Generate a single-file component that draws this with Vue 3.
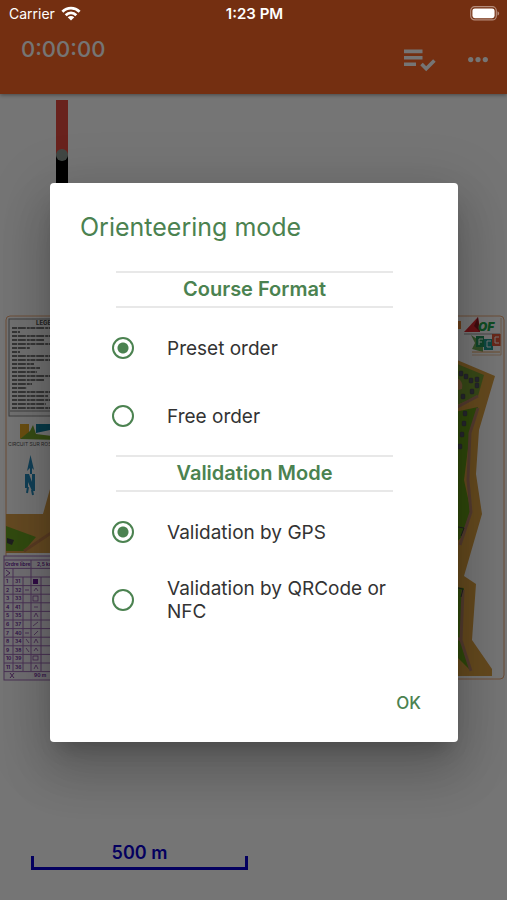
<template>
  <div class="screen">
    <div class="status">
      <div class="carrier">
        <span>Carrier</span>
        <svg width="20" height="16" viewBox="0 0 20 16" aria-hidden="true">
          <g fill="none" stroke="#fff" stroke-width="2.8">
            <path d="M1.4 5.8C6.3 1 13.7 1 18.6 5.8" />
            <path d="M4.7 9.2C7.7 6.2 12.3 6.2 15.3 9.2" />
          </g>
          <path d="M6.7 11.2C8.7 9.5 11.3 9.5 13.3 11.2L10 14.6Z" fill="#fff" />
        </svg>
      </div>
      <span class="time">1:23 PM</span>
      <svg class="battery" width="30" height="15" viewBox="0 0 30 15" aria-hidden="true">
        <rect x="0.7" y="0.7" width="25.6" height="13.2" rx="4" fill="none" stroke="#b58c7b" stroke-width="1.2" />
        <rect x="2.4" y="2.4" width="22.2" height="9.8" rx="2.4" fill="#fff" />
        <path d="M27.5 5.2C29.7 6 29.7 8.8 27.5 9.6Z" fill="#b58c7b" />
      </svg>
    </div>

    <header class="toolbar">
      <span class="timer">0:00:00</span>
      <div class="actions">
        <button type="button" class="action" aria-label="Course format">
          <svg width="32" height="24" viewBox="0 0 32 24" fill="none" stroke="currentColor" stroke-width="3.6">
            <path d="M0 3.4H18.5M0 9.8H18.5M0 16.2H12" />
            <path d="M17.5 16L22.2 20.7L30.4 12.5" />
          </svg>
        </button>
        <button type="button" class="action" aria-label="More">
          <svg width="20" height="24" viewBox="0 0 20 24" fill="currentColor">
            <circle cx="2.7" cy="11.6" r="2.6" />
            <circle cx="10" cy="11.6" r="2.6" />
            <circle cx="17.3" cy="11.6" r="2.6" />
          </svg>
        </button>
      </div>
    </header>

    <main class="map">
      <svg class="needle" width="12" height="116" viewBox="0 0 12 116" aria-hidden="true">
        <rect width="12" height="55" fill="#e54a40" />
        <rect y="55" width="12" height="61" fill="#000" />
        <circle cx="6" cy="55" r="6" fill="#8d9a92" />
      </svg>

      <svg class="sheet" viewBox="0 312 507 372" role="img" aria-label="Course map">
        <rect x="6" y="316" width="498" height="363" rx="4" fill="#fff" stroke="#efaa79" stroke-width="1" />

        <!-- legend -->
        <rect x="9" y="319" width="60" height="97" fill="#f6f6f6" stroke="#888" />
        <text x="36" y="325" class="tiny strong">LEGENDE</text>
        <path
          v-for="(w, i) in legendLines"
          :key="i"
          :d="`M12 ${328 + i * 4}h${w}`"
          stroke="#777"
          stroke-width="1.8"
          stroke-dasharray="5 0.8 8 1 3 0.6"
        />
        <path d="M10 411H60" stroke="#888" />
        <path d="M20 424H29V433L20 439Z" fill="#e9ac27" />
        <path d="M36 424H60V440L50 430L36 433Z" fill="#12809f" />
        <path d="M20 439L30 431L33 425L36 434L60 437V440Z" fill="#79a82c" />
        <text x="8" y="446" class="tiny">CIRCUIT SUR ROSE</text>
        <path d="M30.5 455L34 470L31 467L27 471ZM25 488V474H29L32 482V474H35V491H32L28 482V488Z" fill="#258bbd" />
        <path d="M31 466V474M28 487L27 493M32 490L33 495" stroke="#258bbd" stroke-width="2" />

        <!-- west side of the terrain -->
        <path d="M6 514H43L50 489H60V553H6Z" fill="#dda14a" />
        <path d="M6 526L36 537L24 551H6Z" fill="#6da324" />
        <path d="M24 551L60 527" stroke="#c5834c" stroke-width="3" />
        <path d="M7 538L14 540L12 545L7 543Z" fill="#444" />

        <!-- control descriptions -->
        <g fill="none" stroke="#a06cb8" stroke-width="1">
          <rect x="4" y="556" width="70" height="124" fill="#f7f2fa" />
          <path d="M4 560H74" />
          <path v-for="n in 13" :key="n" :d="`M4 ${559.8 + n * 8.6}H74`" />
          <path d="M13 568V671M23 577V671M31 560V671M41 577V671" />
        </g>
        <g class="controls">
          <text x="5" y="566">Ordre libre</text>
          <text x="37" y="566">2,5 km</text>
          <template v-for="(code, i) in codes" :key="code">
            <text x="6" :y="583 + i * 8.6">{{ i + 1 }}</text>
            <text x="15" :y="583 + i * 8.6">{{ code }}</text>
          </template>
          <text x="34" y="677">90 m</text>
        </g>
        <path d="M6 570L10 573L6 576M10 673L14 678M14 673L10 678" fill="none" stroke="#8c4aa7" />
        <rect x="33" y="579" width="5" height="5" fill="#6d1b9b" />
        <g fill="none" stroke="#8c4aa7" stroke-width="0.8">
          <path d="M25 590H29M34 591L36 588L38 591M34 607H38M33 626L38 622M25 633H29M34 635L38 631M26 639L29 643M26 648L29 652M34 643L36 639L38 643M34 651L36 648L38 651M34 669L36 665L38 669" />
          <rect x="33" y="596" width="5" height="5" />
          <rect x="33" y="656" width="5" height="4" />
          <path d="M34 617L36 613L38 617" />
        </g>

        <!-- partner logos -->
        <path d="M464 332L478 317L480 332Z" fill="#e12a32" />
        <path d="M478 317L480 332L474 326Z" fill="#8d1820" />
        <text x="478" y="331" class="logo">OF</text>
        <path d="M464 334H500" stroke="#999" />
        <rect x="450" y="321" width="11" height="8" fill="#e88a3a" />
        <path d="M471 335L477 339L476 342L483 346V352L472 349L475 343Z" fill="#70ad58" />
        <rect x="476" y="336" width="8" height="11" fill="#24945d" />
        <rect x="484" y="339" width="9" height="11" fill="#1f9d93" />
        <rect x="492" y="334" width="9" height="12" fill="#e5583a" />
        <path d="M479 345v-6h4M479 342h3M491 341h-4v6h4M499 337h-4v6h4" fill="none" stroke="#fff" />
        <path d="M472 352H500" stroke="#eaa361" />
        <path d="M472 355H501V318" fill="none" stroke="#efc49f" />

        <!-- east side of the terrain -->
        <path d="M450 357L495 376L479 430L476 474L482 514L464 576L476 584L472 640L492 669V676H450Z" fill="#dda142" />
        <path d="M450 361L484 375L478 396L450 408Z" fill="#7a9f35" />
        <path d="M450 377Q464 377 462 389L450 392Z" fill="#d59a62" />
        <path d="M450 413L478 407L470 433L464 480L471 512L462 537L450 548Z" fill="#669e19" />
        <path d="M478 396L450 411M478 408L470 433L468 480L471 512L460 545" fill="none" stroke="#b78268" stroke-width="3" />
        <path d="M450 586L464 588L461 640L470 670L450 650Z" fill="#669e19" />
        <path d="M463 590L461 640L450 635M461 640L471 671" fill="none" stroke="#b78268" stroke-width="3" />
        <path d="M458 527L464 528L461 536M458 588L463 589L461 597" fill="none" stroke="#444" stroke-width="1" />
        <g fill="#556" stroke="#444" stroke-width="0.4">
          <rect v-for="([x, y], i) in buildings" :key="i" :x="x" :y="y" width="4" height="5" rx="1" />
        </g>
      </svg>

      <div class="scale">500 m</div>
    </main>

    <div class="scrim">
      <form class="dialog" role="dialog" aria-labelledby="dialog-title" @submit.prevent>
        <h1 id="dialog-title" class="title">Orienteering mode</h1>
        <fieldset v-for="group in groups" :key="group.name" class="group">
          <legend class="heading">{{ group.title }}</legend>
          <label v-for="option in group.options" :key="option.value" class="option">
            <input v-model="selected[group.name]" type="radio" :name="group.name" :value="option.value" class="radio" />
            <span>{{ option.label }}</span>
          </label>
        </fieldset>
        <div class="footer">
          <button type="submit" class="ok">OK</button>
        </div>
      </form>
    </div>
  </div>
</template>

<script setup>
  import { reactive } from 'vue'

  const groups = [
    {
      name: 'format',
      title: 'Course Format',
      options: [
        { value: 'preset', label: 'Preset order' },
        { value: 'free', label: 'Free order' }
      ]
    },
    {
      name: 'validation',
      title: 'Validation Mode',
      options: [
        { value: 'gps', label: 'Validation by GPS' },
        { value: 'manual', label: 'Validation by QRCode or NFC' }
      ]
    }
  ]

  const selected = reactive({ format: 'preset', validation: 'gps' })

  const codes = [31, 32, 33, 41, 35, 37, 40, 34, 38, 39, 36]
  const legendLines = [40, 8, 38, 32, 40, 18, 8, 38, 40, 22, 28, 25, 38, 32, 20, 15, 40, 36, 40, 34, 40]
  const buildings = [
    [459, 371], [464, 374], [469, 378], [475, 377], [475, 383], [470, 389], [461, 394],
    [463, 411], [462, 421], [460, 432], [458, 444]
  ]
</script>

<style>
  body {
    margin: 0;
  }
</style>

<style scoped>
  .screen {
    position: relative;
    display: flex;
    flex-direction: column;
    min-height: 100vh;
    background: #fff;
    font-family: Inter, Roboto, sans-serif;
  }

  .status {
    position: absolute;
    inset: 0 0 auto;
    z-index: 3;
    display: grid;
    grid-template-columns: 1fr auto 1fr;
    align-items: center;
    height: 27px;
    padding: 0 7px 0 9px;
    color: #fff;
    font-size: 15px;
  }

  .carrier {
    display: flex;
    align-items: center;
    gap: 6px;
    font-size: 14px;
  }

  .time {
    font-weight: 600;
  }

  .battery {
    justify-self: end;
  }

  .toolbar {
    z-index: 1;
    box-sizing: border-box;
    display: flex;
    justify-content: space-between;
    height: 94px;
    padding: 35px 19px 0 21px;
    background: #fc6625;
    box-shadow: 0 1px 4px rgba(0, 0, 0, 0.4);
    color: #fff;
  }

  .timer {
    font-size: 22px;
    line-height: 28px;
    font-weight: 500;
  }

  .actions {
    display: flex;
    align-items: center;
    gap: 32px;
    height: 50px;
  }

  .action {
    display: flex;
    padding: 0;
    border: 0;
    background: none;
    color: inherit;
  }

  .map {
    flex: 1;
    display: flex;
    flex-direction: column;
    padding: 6px 0 30px;
  }

  .needle {
    margin-left: 56px;
  }

  .sheet {
    display: block;
    width: 100%;
    margin-top: 96px;
  }

  .tiny {
    font-size: 5px;
    fill: #555;
  }

  .strong {
    font-size: 6px;
    font-weight: 800;
  }

  .controls {
    font-size: 5px;
    font-weight: 600;
    fill: #6d1b9b;
  }

  .logo {
    font-size: 12px;
    font-style: italic;
    font-weight: 900;
    fill: #25a84d;
  }

  .scale {
    box-sizing: border-box;
    width: 217px;
    height: 26px;
    margin: auto 0 0 31px;
    color: #0a00d0;
    font-size: 18px;
    line-height: 18px;
    font-weight: 600;
    text-align: center;
    background:
      linear-gradient(currentColor, currentColor) left bottom / 3px 14px no-repeat,
      linear-gradient(currentColor, currentColor) right bottom / 3px 14px no-repeat,
      linear-gradient(currentColor, currentColor) bottom / 100% 3px no-repeat;
  }

  .scrim {
    position: absolute;
    inset: 0;
    z-index: 2;
    box-sizing: border-box;
    display: flex;
    align-items: center;
    padding: 25px 49px 0 50px;
    background: rgba(0, 0, 0, 0.54);
  }

  .dialog {
    box-sizing: border-box;
    width: 100%;
    padding: 28px 29px 16px 30px;
    border-radius: 4px;
    background: #fff;
    box-shadow:
      0 14px 19px -9px rgba(0, 0, 0, 0.2),
      0 30px 48px 4px rgba(0, 0, 0, 0.14),
      0 11px 58px 10px rgba(0, 0, 0, 0.12);
  }

  .title {
    margin: 0 0 28px;
    color: #4b8250;
    font-size: 25px;
    line-height: 32px;
    font-weight: 400;
  }

  .group {
    min-width: 0;
    margin: 0 36px 5px;
    padding: 0;
    border: 0;
  }

  .heading {
    box-sizing: border-box;
    width: 100%;
    margin: 0 0 6px;
    padding: 0;
    border: solid #e8e8e8;
    border-width: 2px 0;
    color: #4b8250;
    font-size: 20px;
    line-height: 33px;
    font-weight: 600;
    text-align: center;
  }

  .option {
    display: flex;
    align-items: center;
    gap: 33px;
    height: 68px;
    margin-left: -4px;
    color: #333;
    font-size: 19px;
    line-height: 23px;
  }

  .radio {
    flex: none;
    box-sizing: border-box;
    width: 22px;
    height: 22px;
    margin: 0;
    appearance: none;
    border: 2px solid #4b8250;
    border-radius: 50%;
  }

  .radio:checked {
    background: radial-gradient(circle, #4b8250 5px, transparent 6px);
  }

  .footer {
    display: flex;
    justify-content: flex-end;
    padding-top: 41px;
  }

  .ok {
    height: 46px;
    padding: 0 8px;
    border: 0;
    background: none;
    color: #4b8250;
    font-family: inherit;
    font-size: 17px;
    font-weight: 500;
  }
</style>
